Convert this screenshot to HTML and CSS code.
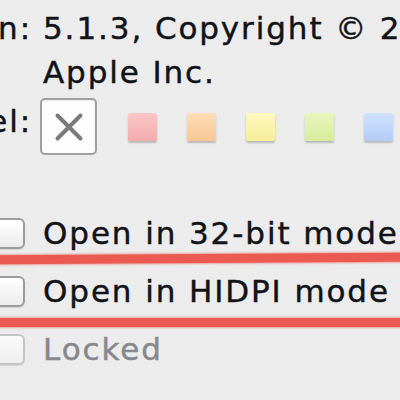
FILE: index.html
```html
<!DOCTYPE html>
<html>
<head>
<meta charset="utf-8">
<link rel="stylesheet" href="styles.css">
</head>
<body>
<div class="info">
  <div class="label">Version:</div>
  <div class="value">5.1.3, Copyright © 2012<br>Apple Inc.</div>

  <div class="label label-top">Label:</div>
  <div class="swatches">
    <div class="none-box">
      <svg width="30" height="30" viewBox="0 0 30 30"><path d="M3.5 3.5 L26.5 26.5 M26.5 3.5 L3.5 26.5" stroke="#7a7a7a" stroke-width="4" stroke-linecap="round" fill="none"/></svg>
    </div>
    <span class="sw red"></span>
    <span class="sw orange"></span>
    <span class="sw yellow"></span>
    <span class="sw green"></span>
    <span class="sw blue"></span>
  </div>

  <div class="spacer"></div>

  <div class="cbcell"><span class="cb"></span></div>
  <div class="cbtext">Open in 32-bit mode</div>

  <div class="cbcell"><span class="cb"></span></div>
  <div class="cbtext">Open in HIDPI mode</div>

  <div class="cbcell"><span class="cb cb-dis"></span></div>
  <div class="cbtext dis">Locked</div>
</div>
<div class="mark mark1"></div>
<div class="mark mark2"></div>
</body>
</html>
```

FILE: styles.css
```css
html, body {
  margin: 0;
  padding: 0;
  width: 400px;
  height: 400px;
  overflow: hidden;
  background: #ececec;
}
body {
  position: relative;
  font-family: "DejaVu Sans", "Liberation Sans", sans-serif;
  font-size: 31px;
  letter-spacing: 1.9px;
  color: #101318;
  -webkit-text-stroke: 0.45px currentColor;
}
.info {
  display: grid;
  grid-template-columns: 32px 1fr;
  column-gap: 11px;
  padding-top: 6px;
}
.label {
  display: flex;
  justify-content: flex-end;
  white-space: nowrap;
  line-height: 44px;
}
.value {
  white-space: nowrap;
  line-height: 44px;
}
.label-top {
  margin-top: 5px;
}
.swatches {
  margin-top: 4px;
  height: 57px;
  display: flex;
  align-items: center;
  gap: 30px;
}
.none-box {
  box-sizing: border-box;
  width: 57px;
  height: 57px;
  margin-left: -3px;
  border: 2px solid #a0a0a0;
  border-radius: 5px;
  background: #fdfdfd;
  box-shadow: inset 0 1px 2px rgba(0,0,0,0.08);
  display: flex;
  align-items: center;
  justify-content: center;
}
.sw {
  width: 29px;
  height: 28px;
  border-radius: 2px;
  box-shadow: 0 2px 2px rgba(0,0,0,0.22);
}
.none-box + .sw { margin-left: 1px; }
.red { background: linear-gradient(#f9c6c6, #f3acac); }
.orange { background: linear-gradient(#fddcb6, #f9c796); }
.yellow { background: linear-gradient(#fdf8c0, #f7ee98); }
.green { background: linear-gradient(#e9f5be, #d8ec9a); }
.blue { background: linear-gradient(#cfe2fd, #b3cdf7); }
.spacer {
  grid-column: 1 / 3;
  height: 49px;
}
.cbcell {
  height: 58px;
  display: flex;
  align-items: center;
  justify-content: flex-end;
}
.cb {
  flex: none;
  box-sizing: border-box;
  width: 31px;
  height: 31px;
  margin-right: 7px;
  border: 2px solid #9c9c9c;
  border-radius: 6px;
  background: linear-gradient(#ffffff, #ececec);
  box-shadow: 0 1px 1px rgba(0,0,0,0.1);
}
.cb-dis {
  border-color: #c4c4c4;
  background: linear-gradient(#fafafa, #efefef);
}
.cbtext {
  height: 58px;
  display: flex;
  align-items: center;
  white-space: nowrap;
  line-height: 44px;
}
.dis {
  color: #85888d;
}
.mark {
  position: absolute;
  left: -4px;
  width: 410px;
  height: 9px;
  border-radius: 4px;
  background: #ea5a51;
  box-shadow: 0 0 2px 1px rgba(234, 90, 81, 0.5);
}
.mark1 {
  top: 254px;
  transform: rotate(-0.35deg);
}
.mark2 {
  top: 318px;
}
```
